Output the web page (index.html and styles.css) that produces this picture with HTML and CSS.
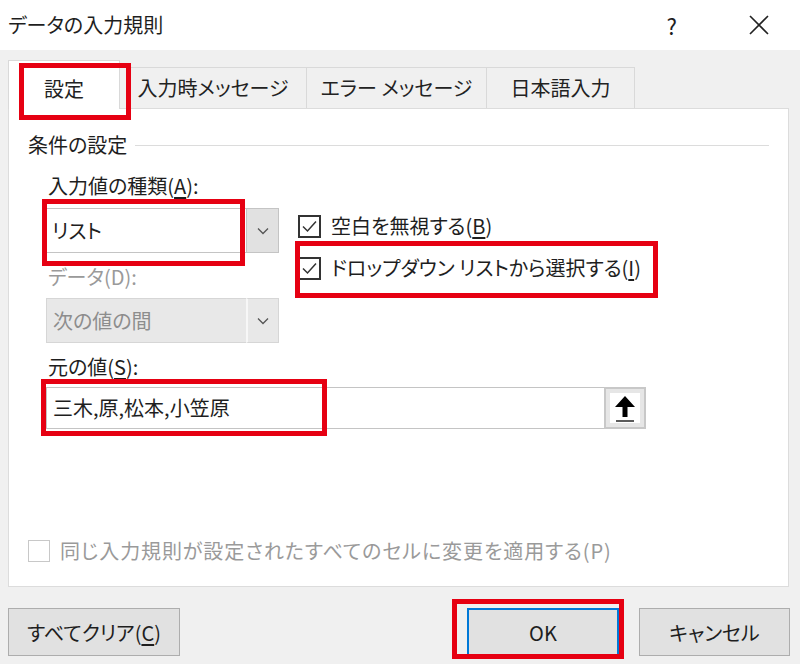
FILE: index.html
```html
<!DOCTYPE html>
<html lang="ja">
<head>
    <meta charset="UTF-8">
    <meta name="viewport" content="width=device-width, initial-scale=1.0">
    <title>データの入力規則</title>
    <link rel="stylesheet" href="styles.css">
</head>
<body>
    <!-- Заголовок окна -->
    <div class="titlebar">
        <span class="title">データの入力規則</span>
        <span class="help">?</span>
        <svg class="close" width="20" height="20" viewBox="0 0 20 20">
            <path d="M1 1 L19 19 M19 1 L1 19" stroke="#222" stroke-width="1.6" fill="none"/>
        </svg>
    </div>

    <div class="dialog">
        <!-- Вкладки -->
        <div class="tabs">
            <div class="tab active hl hl-tab">設定</div>
            <div class="tab tab-input">入力時メッセージ</div>
            <div class="tab tab-error">エラー メッセージ</div>
            <div class="tab tab-ime">日本語入力</div>
        </div>

        <div class="panel">
            <div class="group-head">
                <span>条件の設定</span>
                <span class="rule"></span>
            </div>

            <div class="group">
                <div class="type-row">
                    <div class="left">
                        <div class="label">入力値の種類(<u>A</u>):</div>
                        <div class="combo">
                            <div class="combo-text hl hl-combo">リスト</div>
                            <div class="combo-btn">
                                <svg width="12" height="8" viewBox="0 0 12 8"><path d="M1 1.5 L6 6.5 L11 1.5" stroke="#555" stroke-width="1.3" fill="none"/></svg>
                            </div>
                        </div>
                        <div class="label disabled">データ(D):</div>
                        <div class="combo is-disabled">
                            <div class="combo-text">次の値の間</div>
                            <div class="combo-btn">
                                <svg width="12" height="8" viewBox="0 0 12 8"><path d="M1 1.5 L6 6.5 L11 1.5" stroke="#555" stroke-width="1.3" fill="none"/></svg>
                            </div>
                        </div>
                    </div>

                    <div class="checks">
                        <div class="check">
                            <span class="box"><svg width="19" height="19" viewBox="0 0 19 19"><path d="M3 9.5 L7.5 14 L16 4.5" stroke="#333" stroke-width="1.5" fill="none"/></svg></span>
                            <span>空白を無視する(<u>B</u>)</span>
                        </div>
                        <div class="check hl hl-check">
                            <span class="box"><svg width="19" height="19" viewBox="0 0 19 19"><path d="M3 9.5 L7.5 14 L16 4.5" stroke="#333" stroke-width="1.5" fill="none"/></svg></span>
                            <span>ドロップダウン リストから選択する(<u>I</u>)</span>
                        </div>
                    </div>
                </div>

                <div class="label">元の値(<u>S</u>):</div>
                <div class="source">
                    <div class="source-text hl hl-source">三木,原,松本,小笠原</div>
                    <div class="ref-btn">
                        <span class="ref-inner">
                            <svg width="24" height="30" viewBox="0 0 24 30">
                                <path d="M12 3 L22 14 L14.5 14 L14.5 24 L9.5 24 L9.5 14 L2 14 Z" fill="#000"/>
                                <path d="M3 28 L21 28" stroke="#000" stroke-width="1.3"/>
                            </svg>
                        </span>
                    </div>
                </div>
            </div>

            <div class="check apply disabled">
                <span class="box"></span>
                <span>同じ入力規則が設定されたすべてのセルに変更を適用する(P)</span>
            </div>
        </div>

        <!-- Кнопки -->
        <div class="footer">
            <button class="btn btn-clear">すべてクリア(<u>C</u>)</button>
            <div class="footer-right">
                <button class="btn btn-ok hl hl-ok">OK</button>
                <button class="btn btn-cancel">キャンセル</button>
            </div>
        </div>
    </div>
</body>
</html>
```

FILE: styles.css
```css
*, *::before, *::after {
    margin: 0px;
    padding: 0px;
    box-sizing: border-box;
}

body {
    width: 800px;
    height: 664px;
    overflow: hidden;
    background-color: #f0f0f0;
    color: #1e1e1e;
    font-family: "Noto Sans CJK JP", "Noto Sans", sans-serif;
    font-feature-settings: "palt";
    font-size: 20px;
    line-height: 24px;
}

u {
    text-underline-offset: 3px;
}

/* Заголовок окна */
.titlebar {
    height: 50px;
    background-color: white;
    display: flex;
    align-items: center;
    padding-left: 8px;
}

.title {
    flex: 1;
    font-size: 20px;
}

.help {
    font-size: 22px;
    margin-right: 72px;
}

.close {
    margin-right: 31px;
}

/* Вкладки */
.tabs {
    height: 58px;
    display: flex;
    align-items: flex-end;
    padding-left: 8px;
}

.tab {
    height: 41px;
    display: flex;
    align-items: center;
    justify-content: center;
    border: 1px solid #d9d9d9;
    border-bottom: none;
    border-left: none;
    background-color: #f0f0f0;
    color: #222;
}

.tab-input {
    width: 187px;
}

.tab-error {
    width: 180px;
}

.tab-ime {
    width: 148px;
}

.tab.active {
    width: 112px;
    height: 49px;
    margin-bottom: -1px;
    padding-top: 8px;
    background-color: white;
    border-left: 1px solid #d9d9d9;
    z-index: 2;
}

/* Красные рамки-выделения */
.hl {
    position: relative;
}

.hl::after {
    content: "";
    position: absolute;
    border: 5px solid #e60012;
    pointer-events: none;
    z-index: 5;
}

.hl-tab::after {
    top: 2px;
    left: 10px;
    right: -12px;
    bottom: -11px;
}

.hl-combo::after {
    top: -10px;
    left: -4px;
    right: 1px;
    bottom: -14px;
}

.hl-check::after {
    top: -12px;
    left: -3px;
    right: -17px;
    bottom: -15px;
}

.hl-source::after {
    top: -9px;
    left: -6px;
    width: 286px;
    bottom: -8px;
}

.hl-ok::after {
    top: -11px;
    left: -17px;
    right: -7px;
    bottom: -5px;
}

/* Панель */
.panel {
    position: relative;
    height: 479px;
    margin: 0 11px 0 8px;
    background-color: white;
    border: 1px solid #dcdcdc;
    padding: 24px 19px 23px 19px;
    display: flex;
    flex-direction: column;
}

.group-head {
    display: flex;
    align-items: center;
    gap: 8px;
}

.rule {
    flex: 1;
    height: 1px;
    background-color: #dcdcdc;
}

.group {
    margin-left: 18px;
}

.label {
    padding-left: 2px;
    margin-top: 12px;
}

.type-row {
    display: flex;
    gap: 19px;
    margin-top: 17px;
}

.type-row .left .label:first-child {
    margin-top: 0;
}

.left {
    width: 233px;
}

.combo {
    display: flex;
    height: 45px;
    margin-top: 10px;
}

.combo.is-disabled {
    margin-top: 9px;
}

.combo-text {
    flex: 1;
    display: flex;
    align-items: center;
    padding-left: 6px;
    background-color: white;
    border-top: 1px solid #c4c4c4;
    border-bottom: 1px solid #c4c4c4;
}

.combo-btn {
    width: 33px;
    display: flex;
    align-items: center;
    justify-content: center;
    background-color: #e1e1e1;
    border: 1px solid #c4c4c4;
}

.is-disabled .combo-text {
    color: #8d8d8d;
    background-color: #e8e8e8;
    border: 1px solid #d6d6d6;
    border-right: none;
}

.is-disabled .combo-btn {
    background-color: #e8e8e8;
    border: 1px solid #d6d6d6;
    border-left: 2px solid #f7f7f7;
}

.disabled {
    color: #9a9a9a;
}

/* Флажки */
.checks {
    padding-top: 37px;
    display: flex;
    flex-direction: column;
    align-items: flex-start;
    gap: 12px;
}

.check {
    display: inline-flex;
    align-items: center;
    height: 30px;
    gap: 10px;
}

.box {
    width: 23px;
    height: 23px;
    border: 2px solid #333;
    display: flex;
    align-items: center;
    justify-content: center;
    background-color: white;
}

.apply {
    margin-top: auto;
    height: 24px;
    gap: 10px;
    letter-spacing: 0.9px;
}

.apply .box {
    width: 22px;
    height: 22px;
    border: 1px solid #c8c8c8;
}

/* Поле источника */
.source {
    display: flex;
    height: 42px;
    margin-top: 8px;
}

.source-text {
    width: 558px;
    display: flex;
    align-items: center;
    padding-left: 6px;
    border: 1px solid #c4c4c4;
    border-right: none;
}

.ref-btn {
    width: 42px;
    padding: 4px;
    background-color: #e6e6e6;
    border: 2px solid #c8c8c8;
}

.ref-inner {
    width: 100%;
    height: 100%;
    display: flex;
    align-items: center;
    justify-content: center;
    background-color: white;
}

/* Кнопки внизу */
.footer {
    display: flex;
    justify-content: space-between;
    padding: 21px 10px 0 8px;
}

.footer-right {
    display: flex;
    gap: 20px;
}

.btn {
    height: 48px;
    font-family: inherit;
    font-feature-settings: "palt";
    font-size: 20px;
    color: #1e1e1e;
    background-color: #e1e1e1;
    border: 1px solid #adadad;
}

.btn-clear {
    width: 172px;
}

.btn-ok {
    width: 152px;
    border: 2px solid #0078d7;
}

.btn-cancel {
    width: 151px;
}
```
